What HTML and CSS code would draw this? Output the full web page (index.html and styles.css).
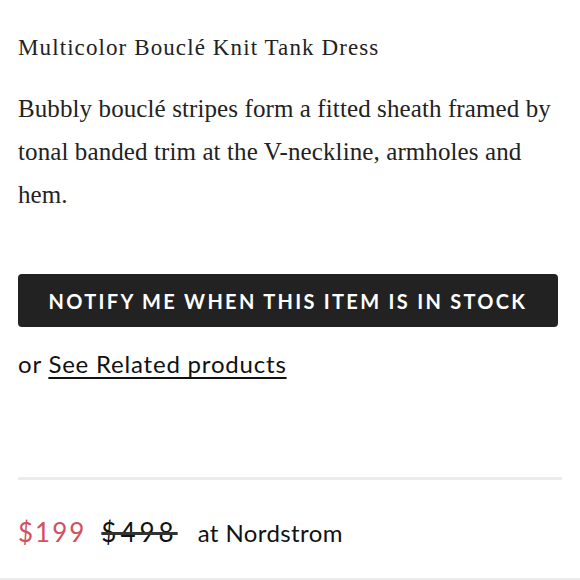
FILE: index.html
```html
<!DOCTYPE html>
<html>
<head>
<meta charset="utf-8">
<link rel="stylesheet" href="styles.css">
</head>
<body>
<div class="page">
  <h1 class="title">Multicolor Bouclé Knit Tank Dress</h1>
  <p class="desc">Bubbly bouclé stripes form a fitted sheath framed by tonal banded trim at the V-neckline, armholes and hem.</p>
  <button class="notify">NOTIFY ME WHEN THIS ITEM IS IN STOCK</button>
  <p class="related">or <a href="#">See Related products</a></p>
  <div class="price-row">
    <span class="sale">$199</span>
    <span class="orig">$498</span>
    <span class="store">at Nordstrom</span>
  </div>
</div>
</body>
</html>
```

FILE: styles.css
```css
html, body { margin: 0; padding: 0; background: #fff; }
.page {
  width: 580px;
  height: 580px;
  box-sizing: border-box;
  padding: 0 18px;
  display: flex;
  flex-direction: column;
  overflow: hidden;
  border-bottom: 2px solid #ececec;
}
.title {
  font-family: "Liberation Serif", serif;
  font-weight: normal;
  font-size: 23px;
  letter-spacing: 1.1px;
  line-height: 30px;
  color: #222;
  margin: 33px 0 0;
}
.desc {
  font-family: "Liberation Serif", serif;
  font-size: 25px;
  letter-spacing: 0.1px;
  line-height: 43px;
  color: #222;
  margin: 24px 0 0;
}
.notify {
  margin-top: 58px;
  height: 53px;
  width: 540px;
  border: none;
  border-radius: 4px;
  background: #222222;
  color: #fff;
  font-family: Lato, sans-serif;
  font-weight: 700;
  font-size: 20px;
  letter-spacing: 2.3px;
  padding: 0;
}
.related {
  font-family: Lato, sans-serif;
  font-size: 24px;
  letter-spacing: 0.8px;
  color: #111;
  margin: 22px 0 0;
  line-height: 30px;
}
.related a {
  color: #111;
  text-decoration: underline;
  text-decoration-thickness: 2px;
  text-underline-offset: 4px;
}
.price-row {
  margin-top: 98px;
  border-top: 3px solid #ececec;
  padding-top: 36px;
  display: flex;
  align-items: baseline;
  font-family: Lato, sans-serif;
}
.sale { color: #d0525e; font-size: 26px; letter-spacing: 2px; }
.orig {
  color: #111;
  font-size: 26px;
  letter-spacing: 4px;
  margin-left: 15px;
  text-decoration: line-through;
  text-decoration-thickness: 3px;
  text-decoration-color: #333;
}
.store { color: #111; font-size: 24px; letter-spacing: 0.4px; margin-left: 20px; }
```
